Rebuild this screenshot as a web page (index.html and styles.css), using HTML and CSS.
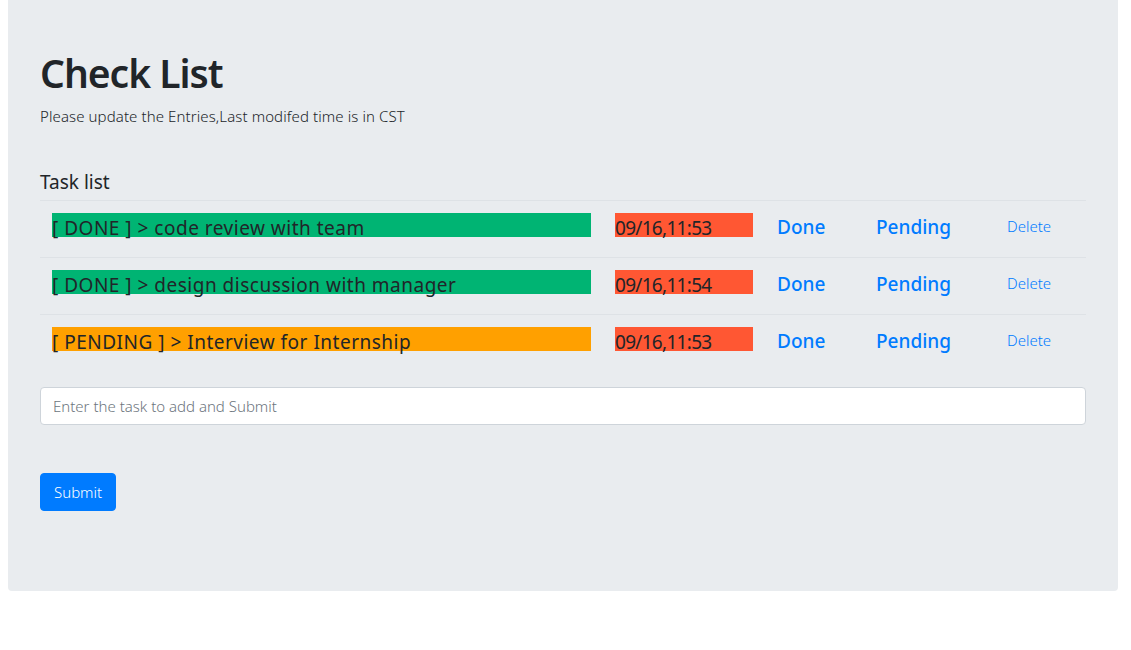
FILE: index.html
```html
<!DOCTYPE html>
<html lang="en">
<head>
<meta charset="utf-8">
<title>Check List</title>
<link rel="stylesheet" href="styles.css">
</head>
<body>
<div class="jumbotron">
  <h1 class="title">Check List</h1>
  <p class="subtitle">Please update the Entries,Last modifed time is in CST</p>
  <h5 class="list-heading">Task list</h5>
  <table class="tasks">
    <colgroup>
      <col class="c-task"><col class="c-time"><col class="c-done"><col class="c-pend"><col class="c-del">
    </colgroup>
    <tbody>
      <tr>
        <td><div class="task done">[ DONE ] &gt; code review with team</div></td>
        <td><div class="time">09/16,11:53</div></td>
        <td><a class="act" href="#">Done</a></td>
        <td><a class="act" href="#">Pending</a></td>
        <td><a class="del" href="#">Delete</a></td>
      </tr>
      <tr>
        <td><div class="task done">[ DONE ] &gt; design discussion with manager</div></td>
        <td><div class="time">09/16,11:54</div></td>
        <td><a class="act" href="#">Done</a></td>
        <td><a class="act" href="#">Pending</a></td>
        <td><a class="del" href="#">Delete</a></td>
      </tr>
      <tr>
        <td><div class="task pending">[ PENDING ] &gt; Interview for Internship</div></td>
        <td><div class="time">09/16,11:53</div></td>
        <td><a class="act" href="#">Done</a></td>
        <td><a class="act" href="#">Pending</a></td>
        <td><a class="del" href="#">Delete</a></td>
      </tr>
    </tbody>
  </table>
  <form class="add-form">
    <input class="task-input" type="text" placeholder="Enter the task to add and Submit">
    <button class="submit-btn" type="button">Submit</button>
  </form>
</div>
</body>
</html>
```

FILE: styles.css
```css
* { box-sizing: border-box; }
html, body { margin: 0; padding: 0; background: #fff; }
body {
  padding: 0 13px 0 8px;
  font-family: "Noto Sans", "Open Sans", sans-serif;
  color: #212529;
  font-size: 16px;
  line-height: 1.5;
}
.jumbotron {
  background: #e9ecef;
  border-radius: 0 0 4px 4px;
  padding: 49px 32px 64px;
  width: 1110px;
}
.title {
  margin: 0 0 7px;
  font-size: 39px;
  font-weight: 600;
  line-height: 48px;
  letter-spacing: -1px;
}
.subtitle {
  margin: 0 0 42px;
  font-size: 15px;
  font-weight: 300;
  line-height: 24px;
  letter-spacing: 0.1px;
}
.list-heading {
  margin: 0 0 6px;
  font-size: 19px;
  font-weight: 400;
  line-height: 24px;
}
.tasks {
  width: 1046px;
  border-collapse: collapse;
  table-layout: fixed;
  margin-bottom: 15px;
}
.c-task { width: 563px; }
.c-time { width: 162px; }
.c-done { width: 99px; }
.c-pend { width: 131px; }
.c-del { width: 91px; }
.tasks td {
  border-top: 1px solid #dee2e6;
  padding: 12px;
  height: 57px;
  vertical-align: top;
}
.task, .time {
  font-size: 19px;
  line-height: 24px;
  height: 24px;
  padding-top: 3px;
  white-space: nowrap;
}
.task { letter-spacing: 0.5px; }
.time { letter-spacing: -0.7px; }
.done { background: #00b473; }
.pending { background: #ffa000; }
.time { background: #ff5733; }
.act {
  display: block;
  font-size: 19px;
  line-height: 28px;
  font-weight: 500;
  color: #007bff;
  text-decoration: none;
}
.del {
  display: block;
  font-size: 15px;
  line-height: 26px;
  font-weight: 300;
  color: #007bff;
  text-decoration: none;
}
.add-form { margin: 0; }
.task-input {
  display: block;
  width: 100%;
  height: 38px;
  padding: 6px 12px;
  font-family: inherit;
  font-size: 15px;
  font-weight: 300;
  color: #495057;
  background: #fff;
  border: 1px solid #ced4da;
  border-radius: 4px;
  margin-bottom: 48px;
}
.task-input::placeholder { color: #6c757d; }
.submit-btn {
  display: block;
  height: 38px;
  padding: 6px 13px;
  font-family: inherit;
  font-size: 15px;
  font-weight: 300;
  color: #fff;
  background: #007bff;
  border: 1px solid #007bff;
  border-radius: 4px;
  margin-bottom: 16px;
}
```
